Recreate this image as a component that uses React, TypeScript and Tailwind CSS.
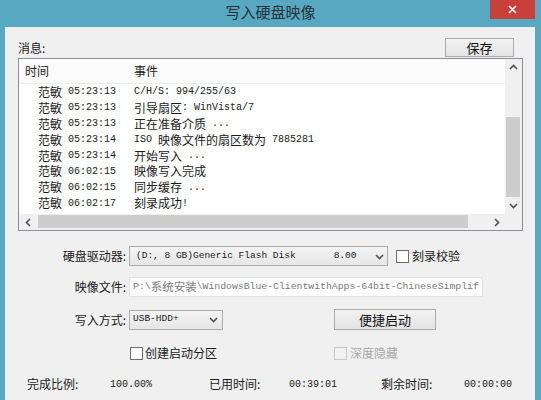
import React from 'react';

const cjk = "font-['Noto_Sans_CJK_SC','Noto_Sans',sans-serif]";
const mono = "font-['Liberation_Mono','Noto_Sans_CJK_SC',monospace]";

const rows = [
  ['05:23:13', 'C/H/S: 994/255/63'],
  ['05:23:13', '引导扇区: WinVista/7'],
  ['05:23:13', '正在准备介质 ...'],
  ['05:23:14', 'ISO 映像文件的扇区数为 7885281'],
  ['05:23:14', '开始写入 ...'],
  ['06:02:15', '映像写入完成'],
  ['06:02:15', '同步缓存 ...'],
  ['06:02:17', '刻录成功!'],
];

// latin parts in a mono face, chinese parts a bit larger in a sans face
function Mixed({ text, latin, han }: { text: string; latin: string; han: string }) {
  const parts = text.split(/([\u4e00-\u9fff\uff1a]+)/).filter(Boolean);
  return (
    <>
      {parts.map((p, i) =>
        /[\u4e00-\u9fff\uff1a]/.test(p) ? (
          <span key={i} className={`${cjk} ${han}`}>{p}</span>
        ) : (
          <span key={i} className={`${mono} ${latin} whitespace-pre`}>{p}</span>
        ),
      )}
    </>
  );
}

function Chevron({ dir, className = '' }: { dir: 'up' | 'down' | 'left' | 'right'; className?: string }) {
  const pts = {
    up: '1,6 4.5,2.5 8,6',
    down: '1,3 4.5,6.5 8,3',
    left: '6,1 2.5,4.5 6,8',
    right: '3,1 6.5,4.5 3,8',
  }[dir];
  return (
    <svg width="9" height="9" viewBox="0 0 9 9" className={className}>
      <polyline points={pts} fill="none" stroke="#505050" strokeWidth="1.6" />
    </svg>
  );
}

function Checkbox({ disabled }: { disabled?: boolean }) {
  return (
    <div
      className={`w-[13px] h-[13px] border ${disabled ? 'border-[#c8c8c8] bg-[#f2f2f2]' : 'border-[#6d6d6d] bg-white'}`}
    />
  );
}

function Button({ children, className = '' }: { children: React.ReactNode; className?: string }) {
  return (
    <div
      className={`flex items-center justify-center border border-[#acacac] bg-gradient-to-b from-[#f2f2f2] to-[#e3e3e3] text-[13px] text-[#111] ${className}`}
    >
      {children}
    </div>
  );
}

export default function App() {
  return (
    <div className={`w-[541px] h-[400px] bg-[#58a8c2] flex flex-col overflow-hidden ${cjk}`}>
      {/* Title bar */}
      <div className="h-[27px] relative flex items-center justify-center">
        <span className="text-[15px] text-[#24323a] -mt-[3px]">写入硬盘映像</span>
        <div className="absolute right-[6px] top-0 w-[45px] h-[19px] bg-[#c9403a] flex items-center justify-center">
          <svg width="9" height="9" viewBox="0 0 9 9">
            <path d="M1 1L8 8M8 1L1 8" stroke="#fff" strokeWidth="1.6" />
          </svg>
        </div>
      </div>

      {/* Client area */}
      <div className="flex-1 ml-[5px] mr-[6px] bg-[#f0f0f0] pl-[13px] pr-[12px] pt-[11px] flex flex-col text-[12px] text-[#1a1a1a]">
        <div className="flex items-start justify-between h-[20px]">
          <span className="mt-[1px]">消息:</span>
          <Button className="w-[69px] h-[19px] mr-[9px]">保存</Button>
        </div>

        {/* Message list */}
        <div className="h-[173px] border border-[#8a8f96] bg-white flex flex-col">
          <div className="flex flex-1 min-h-0">
            <div className="flex-1 flex flex-col">
              <div className="h-[25px] flex items-center border-b border-[#ececec] bg-[#fbfbfb]">
                <span className="w-[115px] pl-[6px]">时间</span>
                <span>事件</span>
              </div>
              <div className="flex flex-col">
                {rows.map(([t, e], i) => (
                  <div key={i} className="h-[15.9px] flex items-center whitespace-nowrap">
                    <span className="pl-[19px] w-[49px]">范敏</span>
                    <span className={`${mono} text-[10px] w-[66px]`}>{t}</span>
                    <span className="flex items-center">
                      <Mixed text={e} latin="text-[10px]" han="text-[12px]" />
                    </span>
                  </div>
                ))}
              </div>
            </div>
            {/* Vertical scrollbar */}
            <div className="w-[17px] bg-[#f0f0f0] flex flex-col items-center">
              <div className="h-[17px] flex items-center justify-center">
                <Chevron dir="up" />
              </div>
              <div className="flex-1 w-full relative">
                <div className="absolute left-[1px] right-[2px] top-[41px] h-[80px] bg-[#cdcdcd]" />
              </div>
              <div className="h-[17px] flex items-center justify-center">
                <Chevron dir="down" />
              </div>
            </div>
          </div>
          {/* Horizontal scrollbar */}
          <div className="h-[16px] flex bg-[#f0f0f0]">
            <div className="w-[18px] flex items-center justify-center">
              <Chevron dir="left" />
            </div>
            <div className="flex-1 relative">
              <div className="absolute left-[1px] top-[1px] bottom-[2px] w-[430px] bg-[#cdcdcd]" />
            </div>
            <div className="w-[18px] flex items-center justify-center">
              <Chevron dir="right" />
            </div>
            <div className="w-[17px]" />
          </div>
        </div>

        {/* Form */}
        <div className="flex items-center mt-[15px] h-[20px]">
          <span className="w-[110px] text-right pr-[2px]">硬盘驱动器:</span>
          <div className="ml-[1px] w-[259px] h-[20px] border border-[#adadad] bg-gradient-to-b from-[#f4f4f4] to-[#e6e6e6] flex items-center pl-[6px] pr-[3px]">
            <span className={`${mono} text-[9.5px] whitespace-nowrap`}>(D:, 8 GB)Generic Flash Disk</span>
            <span className={`${mono} text-[9.5px] ml-[38px]`}>8.00</span>
            <Chevron dir="down" className="ml-auto" />
          </div>
          <div className="ml-[8px] flex items-center gap-[3px]">
            <Checkbox />
            <span>刻录校验</span>
          </div>
        </div>

        <div className="flex items-center mt-[11px] h-[20px]">
          <span className="w-[110px] text-right pr-[2px]">映像文件:</span>
          <div className="ml-[1px] w-[354px] h-[20px] border border-[#e2e2e2] bg-white flex items-center pl-[3px] overflow-hidden text-[#7a7a7a] whitespace-nowrap">
            <Mixed text="P:\系统安装\WindowsBlue-ClientwithApps-64bit-ChineseSimplif" latin="text-[9.8px]" han="text-[11.5px]" />
          </div>
        </div>

        <div className="flex items-center mt-[12px] h-[21px]">
          <span className="w-[110px] text-right pr-[2px]">写入方式:</span>
          <div className="ml-[1px] w-[94px] h-[20px] border border-[#adadad] bg-gradient-to-b from-[#f4f4f4] to-[#e6e6e6] flex items-center pl-[3px] pr-[4px]">
            <span className={`${mono} text-[9.5px]`}>USB-HDD+</span>
            <Chevron dir="down" className="ml-auto" />
          </div>
          <Button className="ml-[111px] w-[102px] h-[21px]">便捷启动</Button>
        </div>

        <div className="flex items-center mt-[14px] h-[18px]">
          <div className="ml-[112px] flex items-center gap-[2px] w-[204px]">
            <Checkbox />
            <span>创建启动分区</span>
          </div>
          <div className="flex items-center gap-[3px] text-[#a8a8a8]">
            <Checkbox disabled />
            <span>深度隐藏</span>
          </div>
        </div>

        <div className="flex items-center mt-[13px] h-[18px] whitespace-nowrap">
          <span className="ml-[9px] w-[83px]">完成比例:</span>
          <span className={`${mono} text-[10px] w-[99px]`}>100.00%</span>
          <span className="w-[80px]">已用时间:</span>
          <span className={`${mono} text-[10px] w-[92px]`}>00:39:01</span>
          <span className="w-[83px]">剩余时间:</span>
          <span className={`${mono} text-[10px]`}>00:00:00</span>
        </div>
      </div>
    </div>
  );
}
